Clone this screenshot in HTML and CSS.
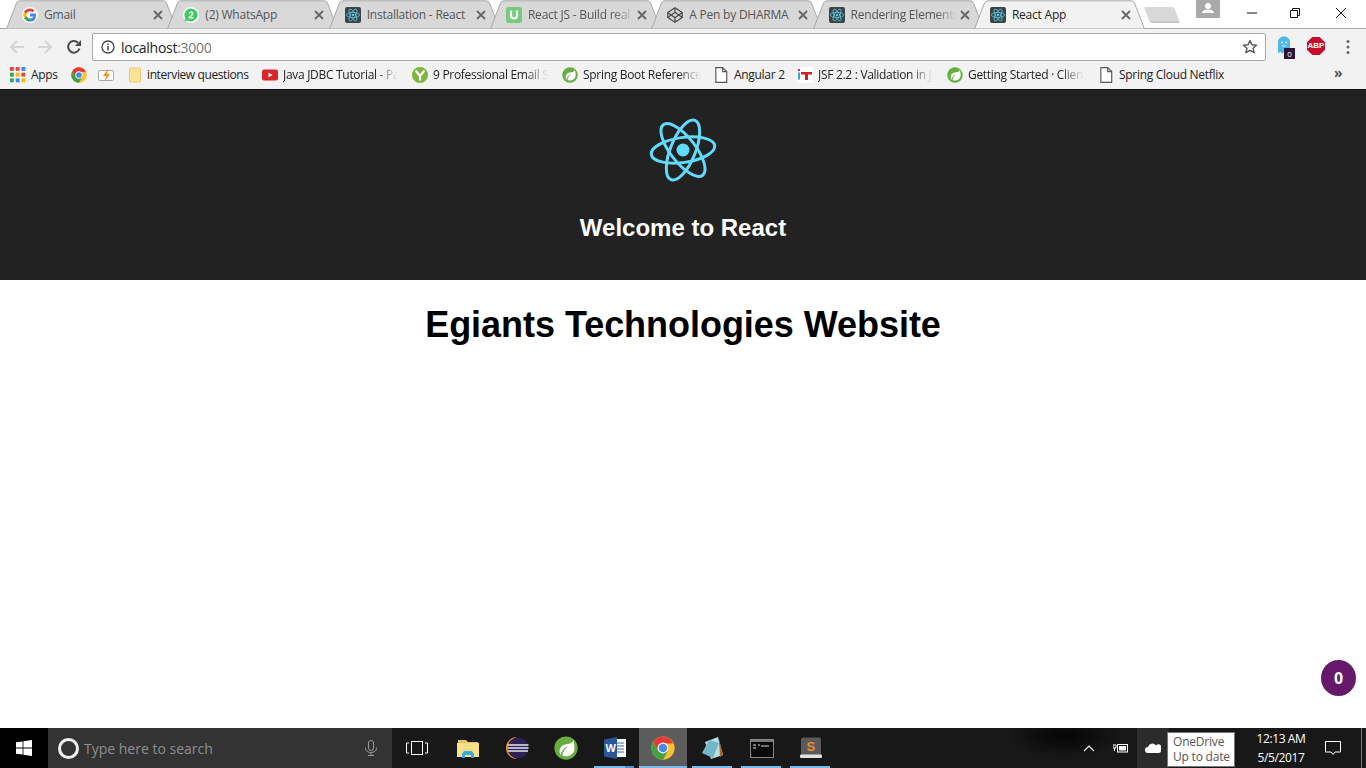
FILE: index.html
```html
<!DOCTYPE html>
<html lang="en">
<head>
<meta charset="utf-8">
<title>React App</title>
<link rel="stylesheet" href="styles.css">
</head>
<body>
<svg class="defs" aria-hidden="true">
  <symbol id="tabshape" viewBox="0 0 171 29"><path d="M0.5 29 L10.5 3 Q11.5 0.8 14 0.8 L157 0.8 Q159.5 0.8 160.5 3 L170.5 29 Z"/></symbol>
  <symbol id="x" viewBox="0 0 10 10"><path d="M1 1 L9 9 M9 1 L1 9" stroke="#666" stroke-width="1.8" fill="none"/></symbol>
  <symbol id="react" viewBox="0 0 16 16"><rect width="16" height="16" rx="2" fill="#3c4449"/><g fill="none" stroke="#5cc3dc" stroke-width=".8"><ellipse cx="8" cy="8" rx="6.6" ry="2.6"/><ellipse cx="8" cy="8" rx="6.6" ry="2.6" transform="rotate(60 8 8)"/><ellipse cx="8" cy="8" rx="6.6" ry="2.6" transform="rotate(120 8 8)"/></g><circle cx="8" cy="8" r="1.3" fill="#5cc3dc"/></symbol>
  <symbol id="google" viewBox="0 0 16 16"><circle cx="8" cy="8" r="8" fill="#fff"/><path d="M14 6.6H8v2.9h3.4c-.4 1.3-1.7 2.1-3.4 2.1V14.6c2 0 3.4-.6 4.5-1.7 1.2-1.2 1.7-3.2 1.5-6.3z" fill="#4285f4"/><path d="M8 11.6c-1.6 0-2.9-1-3.4-2.5L2 11c1.1 2.2 3.3 3.6 6 3.6z" fill="#34a853"/><path d="M4.6 9.1a3.7 3.7 0 0 1 0-2.3L2 4.8a6.6 6.6 0 0 0 0 6.2z" fill="#fbbc05"/><path d="M8 4.3c1 0 1.8.3 2.5 1l2-2C11.400 2.100 9.800 1.400 8 1.400 5.400 1.400 3.100 2.800 2 4.800l2.600 2C5.100 5.300 6.400 4.300 8 4.300z" fill="#ea4335"/></symbol>
  <symbol id="whatsapp" viewBox="0 0 16 16"><circle cx="8" cy="8" r="8" fill="#fff"/><path d="M8 1.500a6.500 6.500 0 0 0-5.500 10L1.500 14.500l3.100-1A6.500 6.500 0 1 0 8 1.500z" fill="#3ecb5d"/><path d="M5.500 6.300c.2-1.300 1.300-1.900 2.500-1.900 1.400 0 2.500.8 2.500 2.100 0 1.100-.7 1.800-1.600 2.500L7.600 10h3v1.500H5.400v-1.200l2.200-2c.9-.8 1.200-1.200 1.200-1.700 0-.5-.4-.8-.9-.8-.6 0-.9.400-1 1z" fill="#fff"/></symbol>
  <symbol id="udemy" viewBox="0 0 16 16"><rect width="16" height="16" rx="3" fill="#74cb7b"/><path d="M5 3.500v5a3 3 0 0 0 6 0v-5" fill="none" stroke="#fff" stroke-width="2.200"/></symbol>
  <symbol id="codepen" viewBox="0 0 16 16"><g fill="none" stroke="#444" stroke-width="1.200" stroke-linejoin="round"><path d="M8 .8 15.200 5.500v5L8 15.200.8 10.500v-5z"/><path d="M8 .8v4.400M8 10.800v4.400M.8 5.500 8 10.800l7.200-5.300M.8 10.500 8 5.200l7.200 5.300"/></g></symbol>
  <symbol id="apps" viewBox="0 0 14 14"><g><rect x="0" y="0" width="3.400" height="3.400" fill="#e8453c"/><rect x="5" y="0" width="3.400" height="3.400" fill="#e8453c"/><rect x="10" y="0" width="3.400" height="3.400" fill="#4285f4"/><rect x="0" y="5" width="3.400" height="3.400" fill="#34a853"/><rect x="5" y="5" width="3.400" height="3.400" fill="#fbbc05"/><rect x="10" y="5" width="3.400" height="3.400" fill="#e8453c"/><rect x="0" y="10" width="3.400" height="3.400" fill="#34a853"/><rect x="5" y="10" width="3.400" height="3.400" fill="#4285f4"/><rect x="10" y="10" width="3.400" height="3.400" fill="#fbbc05"/></g></symbol>
  <symbol id="chrome" viewBox="0 0 32 32"><circle cx="16" cy="16" r="15.500" fill="#fbc02d"/><path d="M16 .5A15.500 15.500 0 0 0 2.600 8.200L9.500 20 16 10h13.400A15.500 15.500 0 0 0 16 .5z" fill="#e53935"/><path d="M2.600 8.200A15.500 15.500 0 0 0 16 31.500L22.500 20H9.500z" fill="#43a047"/><circle cx="16" cy="16" r="7.300" fill="#fff"/><circle cx="16" cy="16" r="5.700" fill="#4a89e8"/></symbol>
  <symbol id="flash" viewBox="0 0 16 14"><rect x=".5" y="2.500" width="15" height="10" rx="1.500" fill="#fff" stroke="#aaa"/><path d="M10 .5 5 8h3l-1.500 5.500L12 6H9z" fill="#f29423"/></symbol>
  <symbol id="folder" viewBox="0 0 12 16"><rect x=".5" y="1" width="11" height="14" rx="1" fill="#fde293" stroke="#e9c874"/></symbol>
  <symbol id="yt" viewBox="0 0 16 12"><rect width="16" height="11" rx="2" y=".5" fill="#d9252a"/><path d="M6.500 3.500v5l4-2.500z" fill="#fff"/></symbol>
  <symbol id="ybm" viewBox="0 0 16 16"><circle cx="8" cy="8" r="8" fill="#7db53e"/><path d="M3.500 3.500 8 9v4.500M12.500 3.500 8 9" fill="none" stroke="#fff" stroke-width="2.200"/></symbol>
  <symbol id="spring" viewBox="0 0 32 32"><circle cx="16" cy="16" r="15.500" fill="#67ad3f"/><path d="M26 5.500c-1 3-3 4.500-8 5C11 11.200 6.500 15.500 7.500 22c.3 1.500 1 2.700 1.500 3.300C10 20 13 16 20 13c-5 3.500-8 7.500-9 13 6 2.500 14 .5 16-7 .8-3.500 0-9.500-1-13.500z" fill="#fff"/></symbol>
  <symbol id="doc" viewBox="0 0 12 14"><path d="M1.500.5h6l3.500 3.500v9.500H1.500zM7.500.5V4H11" fill="#fff" stroke="#555"/></symbol>
  <symbol id="it" viewBox="0 0 16 16"><rect width="16" height="16" fill="#fff"/><rect x="1" y="2" width="2" height="2" fill="#e22"/><rect x="1" y="5.500" width="2" height="7" fill="#3aa0e0"/><path d="M4 5h11v2.500h-4V13H8V7.500H4z" fill="#d21f1f"/></symbol>
  <symbol id="ghost" viewBox="0 0 14 18"><path d="M7 .5C3.200.5 1 3 1 6.500v11l2.400-1.800L5 17.500l2-1.800 2 1.800 1.600-1.800 2.400 1.800v-11C13 3 10.800.500 7 .5z" fill="#4db8ec"/><circle cx="5" cy="6.500" r="1" fill="#fff"/><circle cx="9.200" cy="6.500" r="1" fill="#fff"/><path d="M5 9.500q2 1.500 4.200 0" fill="none" stroke="#fff" stroke-width=".8"/></symbol>
  <symbol id="abp" viewBox="0 0 18 18"><path d="M5.300 0h7.400L18 5.300v7.400L12.700 18H5.300L0 12.700V5.300z" fill="#c70d2c"/></symbol>
</svg>

<header class="browser">
  <div class="tabstrip">
    <div class="tabs">
      <div class="tab"><svg class="tab-bg"><use href="#tabshape"/></svg><svg class="fav"><use href="#google"/></svg><span class="tab-title">Gmail</span><svg class="close"><use href="#x"/></svg></div>
      <div class="tab"><svg class="tab-bg"><use href="#tabshape"/></svg><svg class="fav"><use href="#whatsapp"/></svg><span class="tab-title">(2) WhatsApp</span><svg class="close"><use href="#x"/></svg></div>
      <div class="tab"><svg class="tab-bg"><use href="#tabshape"/></svg><svg class="fav"><use href="#react"/></svg><span class="tab-title">Installation - React</span><svg class="close"><use href="#x"/></svg></div>
      <div class="tab"><svg class="tab-bg"><use href="#tabshape"/></svg><svg class="fav"><use href="#udemy"/></svg><span class="tab-title fade">React JS - Build real</span><svg class="close"><use href="#x"/></svg></div>
      <div class="tab"><svg class="tab-bg"><use href="#tabshape"/></svg><svg class="fav"><use href="#codepen"/></svg><span class="tab-title">A Pen by DHARMA</span><svg class="close"><use href="#x"/></svg></div>
      <div class="tab"><svg class="tab-bg"><use href="#tabshape"/></svg><svg class="fav"><use href="#react"/></svg><span class="tab-title fade">Rendering Elements</span><svg class="close"><use href="#x"/></svg></div>
      <div class="tab active"><svg class="tab-bg"><use href="#tabshape"/></svg><svg class="fav"><use href="#react"/></svg><span class="tab-title">React App</span><svg class="close"><use href="#x"/></svg></div>
    </div>
    <div class="newtab"></div>
    <div class="profile"><svg viewBox="0 0 24 18" class="profile-icon"><circle cx="12" cy="6" r="3" fill="#fff"/><path d="M6 13c0-2.500 3-3.500 6-3.500s6 1 6 3.500z" fill="#fff"/></svg></div>
    <div class="winctl">
      <svg class="wc wc-min" viewBox="0 0 12 12"><path d="M1 6h10" stroke="#111" stroke-width="1" fill="none"/></svg>
      <svg class="wc wc-max" viewBox="0 0 12 12"><path d="M1.500 3.500h7v7h-7zM3.500 3.500v-2h7v7h-2" stroke="#111" stroke-width="1" fill="none"/></svg>
      <svg class="wc wc-close" viewBox="0 0 12 12"><path d="M1 1l10 10M11 1L1 11" stroke="#111" stroke-width="1" fill="none"/></svg>
    </div>
  </div>

  <div class="toolbar">
    <svg class="tool back" viewBox="0 0 16 16"><path d="M15 8H2M8 2 2 8l6 6" fill="none" stroke="#d4d4d4" stroke-width="2"/></svg>
    <svg class="tool forward" viewBox="0 0 16 16"><path d="M1 8h13M8 2l6 6-6 6" fill="none" stroke="#d4d4d4" stroke-width="2"/></svg>
    <svg class="tool reload" viewBox="0 0 16 16"><path d="M13.500 9.500A5.800 5.800 0 1 1 12 3.700" fill="none" stroke="#4a4a4a" stroke-width="2"/><path d="M15 1v6H9z" fill="#4a4a4a"/></svg>
    <div class="omnibox">
      <svg class="info" viewBox="0 0 14 14"><circle cx="7" cy="7" r="6" fill="none" stroke="#444" stroke-width="1.300"/><path d="M7 6v4.500M7 3.500v1.500" stroke="#444" stroke-width="1.500"/></svg>
      <span class="url">localhost<span class="port">:3000</span></span>
      <svg class="star" viewBox="0 0 16 16"><path d="M8 1.500l1.900 4.300 4.600.4-3.500 3 1.100 4.500L8 11.300l-4.100 2.400L5 9.200l-3.500-3 4.600-.4z" fill="none" stroke="#555" stroke-width="1.400" stroke-linejoin="round"/></svg>
    </div>
    <div class="ext ghost-wrap"><svg class="ghost" viewBox="0 0 14 18"><use href="#ghost"/></svg><span class="ghost-badge">0</span></div>
    <div class="ext abp-wrap"><svg class="abp"><use href="#abp"/></svg><span class="abp-text">ABP</span></div>
    <svg class="menu" viewBox="0 0 4 16"><circle cx="2" cy="2.500" r="1.500" fill="#666"/><circle cx="2" cy="8" r="1.500" fill="#666"/><circle cx="2" cy="13.500" r="1.500" fill="#666"/></svg>
  </div>

  <nav class="bookmarks">
    <div class="bm w-apps"><svg class="bm-i"><use href="#apps"/></svg><span class="bm-t">Apps</span></div>
    <div class="bm w-chrome"><svg class="bm-i"><use href="#chrome"/></svg></div>
    <div class="bm w-flash"><svg class="bm-i"><use href="#flash"/></svg></div>
    <div class="bm w-iq"><svg class="bm-i folder-i"><use href="#folder"/></svg><span class="bm-t tight">interview questions</span></div>
    <div class="bm w-150"><svg class="bm-i"><use href="#yt"/></svg><span class="bm-t fade">Java JDBC Tutorial - Part</span></div>
    <div class="bm w-150"><svg class="bm-i"><use href="#ybm"/></svg><span class="bm-t fade">9 Professional Email Sign</span></div>
    <div class="bm w-spring"><svg class="bm-i"><use href="#spring"/></svg><span class="bm-t fade">Spring Boot Reference Guide</span></div>
    <div class="bm w-angular"><svg class="bm-i"><use href="#doc"/></svg><span class="bm-t">Angular 2</span></div>
    <div class="bm w-150"><svg class="bm-i"><use href="#it"/></svg><span class="bm-t fade">JSF 2.2 : Validation in JSF</span></div>
    <div class="bm w-gs"><svg class="bm-i"><use href="#spring"/></svg><span class="bm-t fade">Getting Started · Client Side</span></div>
    <div class="bm w-sc"><svg class="bm-i"><use href="#doc"/></svg><span class="bm-t">Spring Cloud Netflix</span></div>
    <span class="more">»</span>
  </nav>
</header>

<div class="page">
  <section class="app-header">
    <svg class="app-logo" viewBox="0 0 80 80">
      <g fill="none" stroke="#61dafb" stroke-width="3">
        <ellipse cx="40" cy="40" rx="32" ry="12.500" transform="rotate(-8 40 40)"/>
        <ellipse cx="40" cy="40" rx="32" ry="12.500" transform="rotate(52 40 40)"/>
        <ellipse cx="40" cy="40" rx="32" ry="12.500" transform="rotate(112 40 40)"/>
      </g>
      <circle cx="40" cy="40" r="6.500" fill="#61dafb"/>
    </svg>
    <h2 class="welcome">Welcome to React</h2>
  </section>
  <h1 class="site-title">Egiants Technologies Website</h1>
  <div class="bubble">0</div>
</div>

<footer class="taskbar">
  <div class="start"><svg class="win" viewBox="0 0 16 16"><path d="M0 2.300 6.600 1.400V7.600H0zM7.400 1.300 16 0V7.600H7.400zM0 8.400H6.600V14.600L0 13.700zM7.400 8.400H16V16L7.400 14.700z" fill="#fff"/></svg></div>
  <div class="search">
    <span class="cortana"></span>
    <span class="search-text">Type here to search</span>
    <svg class="mic" viewBox="0 0 12 16"><rect x="3.500" y=".5" width="5" height="10" rx="2.500" fill="none" stroke="#999"/><path d="M.5 7.500v1a5.500 4 0 0 0 11 0v-1M6 12.500v3M3 15.500h6" fill="none" stroke="#999"/></svg>
  </div>
  <div class="tasks">
    <div class="task"><svg class="taskview" viewBox="0 0 22 14"><rect x="5.500" y=".5" width="11" height="13" fill="none" stroke="#fff"/><path d="M3 2H.5v10H3M19 2h2.500v10H19" fill="none" stroke="#fff"/></svg></div>
    <div class="task"><svg class="ticon" viewBox="0 0 24 24"><path d="M2 4h8l2 2h10v3H2z" fill="#e9c15a"/><rect x="1" y="7" width="22" height="14" fill="#fbe08a"/><path d="M8 15h8l2 3v4h-3v-3H9v3H6v-4z" fill="#3aa9e0"/></svg></div>
    <div class="task"><svg class="ticon" viewBox="0 0 24 24"><path d="M12 1a11 11 0 0 0 0 22A11.500 11.500 0 0 1 12 1z" fill="#f7941e"/><circle cx="13" cy="12" r="10.500" fill="#2c2255"/><path d="M2.500 9h21M2.500 12h21M3 15h20" stroke="#e8e6f0" stroke-width="1.500"/></svg></div>
    <div class="task"><svg class="ticon" viewBox="0 0 32 32"><use href="#spring"/></svg></div>
    <div class="task on word"><svg class="ticon" viewBox="0 0 24 24"><rect x="10" y="3" width="13" height="18" fill="#fff"/><path d="M13 7h8M13 10h8M13 13h8M13 16h8" stroke="#3a66a9"/><path d="M1 3.500 14 1v22L1 20.500z" fill="#2b579a"/><text x="2.500" y="16" class="wordw">W</text></svg></div>
    <div class="task on current"><svg class="ticon" viewBox="0 0 32 32"><use href="#chrome"/></svg></div>
    <div class="task on"><svg class="ticon" viewBox="0 0 24 24"><path d="M4 6 17 1l5 18-12 4z" fill="#b6dfe6"/><path d="M1 17 8 4l10 3-6 15z" fill="#74b6c6"/><path d="M18 3l4 16-3 2z" fill="#a86a20"/></svg></div>
    <div class="task on"><svg class="ticon" viewBox="0 0 24 24"><rect x=".5" y="3.500" width="23" height="18" fill="#0a0a0a" stroke="#888"/><rect x="1" y="4" width="22" height="2" fill="#777"/><path d="M3 9h3M3 12h3M8 9h2M11 10h8" stroke="#ddd"/></svg></div>
    <div class="task on"><svg class="ticon" viewBox="0 0 24 24"><rect x="2" y="1.500" width="20" height="20" rx="2" fill="#5a5a5a"/><rect x="1" y="18.500" width="22" height="3.500" rx="1.200" fill="#e2e2e2"/><text x="7.500" y="15" class="sublime">S</text></svg></div>
  </div>
  <div class="tray">
    <svg class="chev" viewBox="0 0 12 7"><path d="M1 6l5-5 5 5" fill="none" stroke="#fff" stroke-width="1.200"/></svg>
    <svg class="batt" viewBox="0 0 16 10"><path d="M0 2h3v3H0zM1.500 5v3" stroke="#fff" fill="none"/><rect x="4.500" y="1.500" width="10" height="7.500" fill="none" stroke="#fff"/><rect x="6" y="3" width="7" height="4.500" fill="#fff"/></svg>
    <div class="onedrive"><svg class="cloud" viewBox="0 0 16 10"><path d="M3 10a3 3 0 0 1 0-6 4.500 4.500 0 0 1 8-1.500A3.500 3.500 0 0 1 16 7.500 2.500 2.500 0 0 1 13.500 10z" fill="#fff"/></svg></div>
    <div class="clock"><div>12:13 AM</div><div>5/5/2017</div></div>
    <svg class="action" viewBox="0 0 16 16"><path d="M.5 1.500h15v10.500h-5.500L8 14.500 6 12H.5z" fill="none" stroke="#fff"/></svg>
    <span class="showdesk"></span>
    <div class="tooltip">OneDrive<br>Up to date</div>
  </div>
</footer>
</body>
</html>
```
FILE: styles.css
```css
* { box-sizing: border-box; }
html, body { margin: 0; height: 100%; }
body {
  width: 1366px; height: 768px; overflow: hidden;
  display: flex; flex-direction: column;
  background: #fff;
  font-family: "Open Sans", "Liberation Sans", sans-serif;
}
.defs { position: absolute; width: 0; height: 0; }

/* browser chrome */
.browser { flex: none; height: 90px; display: flex; flex-direction: column; border-bottom: 1px solid #111; }
.tabstrip { height: 29px; flex: none; display: flex; position: relative; border-bottom: 1px solid #a8a8a8; background: #fff; }
.tabs { display: flex; padding-left: 6px; }
.tab {
  position: relative; flex: none; width: 171px; height: 29px; margin-right: -9.7px;
  display: flex; align-items: center; padding: 0 14px 0 16px;
  color: #555; fill: #d8d8d8; stroke: #a8a8a8;
}
.tab.active { fill: #f2f2f2; color: #222; z-index: 2; }
.tab-bg { position: absolute; left: 0; top: 0; width: 171px; height: 29px; }
.fav { position: relative; flex: none; width: 16px; height: 16px; fill: none; stroke: none; }
.tab-title {
  position: relative; flex: 1; margin-left: 6px; white-space: nowrap; overflow: hidden;
  font-size: 12px; letter-spacing: -.22px;
}
.fade {
  -webkit-mask-image: linear-gradient(to right, #000 80%, transparent);
  mask-image: linear-gradient(to right, #000 80%, transparent);
}
.close { position: relative; flex: none; width: 10px; height: 10px; stroke: none; margin-left: 3px; }
.newtab {
  flex: none; width: 30px; height: 16px; margin: 7px 0 0 12px;
  background: #d8d8d8; border-bottom: 2px solid #c4c4c4; border-radius: 2px;
  transform: skewX(22deg);
}
.profile { flex: none; width: 24px; height: 18px; background: #aaa; margin-left: 19px; }
.profile-icon { display: block; width: 24px; height: 18px; }
.winctl { flex: 1; display: flex; padding-left: 26px; }
.wc { flex: none; width: 12px; height: 12px; margin-top: 7px; }
.wc-max { margin-left: 31px; }
.wc-close { margin-left: 34px; }

.toolbar { height: 33px; flex: none; background: #f2f2f2; display: flex; align-items: center; padding: 3px 0 0 9px; }
.tool { width: 16px; height: 16px; flex: none; }
.forward { margin-left: 12px; }
.reload { margin-left: 13px; }
.omnibox {
  flex: none; margin-left: 10px; width: 1174px; height: 28px; background: #fff;
  border: 1px solid #a9a9a9; border-radius: 2px;
  display: flex; align-items: center; padding: 0 7px 0 8px;
}
.info { width: 14px; height: 14px; flex: none; }
.url { margin-left: 6px; font-size: 14px; color: #222; flex: 1; letter-spacing: -.28px; }
.port { color: #777; }
.star { width: 16px; height: 16px; flex: none; }
.ext { position: relative; flex: none; }
.ghost-wrap { margin-left: 11px; width: 22px; height: 24px; }
.ghost { position: absolute; left: 0; top: 1px; width: 14px; height: 18px; }
.ghost-badge {
  position: absolute; left: 7px; top: 13px; width: 11px; height: 11px;
  background: #2c1338; color: #fff; font-size: 8px; line-height: 11px; text-align: center;
}
.abp-wrap { margin-left: 8px; width: 18px; height: 18px; margin-top: -2px; }
.abp { position: absolute; left: 0; top: 0; width: 18px; height: 18px; }
.abp-text { position: absolute; left: 0; top: 0; width: 18px; line-height: 18px; font-size: 8px; font-weight: 800; color: #fff; text-align: center; font-family: "Liberation Sans", sans-serif; }
.menu { width: 4px; height: 16px; margin-left: 21px; flex: none; }

.bookmarks { height: 27px; flex: none; background: #f2f2f2; display: flex; align-items: center; padding: 0 0 2px 10px; position: relative; }
.bm { display: flex; align-items: center; flex: none; overflow: hidden; }
.bm-i { width: 16px; height: 16px; flex: none; }
.folder-i { width: 14px; }
.bm-t { margin-left: 5px; font-size: 12px; letter-spacing: -.3px; color: #222; white-space: nowrap; overflow: hidden; flex: 1; }
.tight { letter-spacing: -.4px; }
.w-apps { width: 61px; }
.w-chrome { width: 27px; }
.w-flash { width: 30px; }
.w-iq { width: 134px; }
.w-150 { width: 150px; padding-right: 14px; }
.w-spring { width: 151px; padding-right: 12px; }
.w-angular { width: 84px; }
.w-gs { width: 151px; padding-right: 14px; }
.w-sc { width: 140px; }
.more { position: absolute; left: 1334px; top: 1px; font-size: 14px; color: #555; font-weight: 700; }

/* page */
.page { flex: 1; position: relative; text-align: center; }
.app-header { height: 190px; background: #222; padding-top: 20px; color: #fff; }
.app-logo { display: block; width: 80px; height: 80px; margin: 0 auto; }
.welcome { margin: 24px 0 0; font: 700 24px/28px "Liberation Sans", Arial, sans-serif; }
.site-title { margin: 23px 0 0; font: 700 36px/43px "Liberation Sans", Arial, sans-serif; letter-spacing: -.04px; color: #000; }
.bubble {
  position: absolute; left: 1321px; top: 570px; width: 35px; height: 36px; border-radius: 50%;
  background: #66186b; color: #fff; font-size: 16px; font-weight: 700; line-height: 36px; text-align: center;
}

/* taskbar */
.taskbar {
  height: 40px; flex: none; display: flex; position: relative;
  background:
    radial-gradient(ellipse 60px 22px at 1065px 8px, #050505, transparent),
    #181818;
}
.start { flex: none; width: 48px; background: #000; display: flex; align-items: center; justify-content: center; }
.win { width: 16px; height: 16px; }
.search { flex: none; width: 344px; background: #333; display: flex; align-items: center; padding-left: 10px; }
.cortana { width: 21px; height: 21px; border-radius: 50%; border: 3px solid #f0f0f0; flex: none; }
.search-text { margin-left: 5px; flex: 1; font-size: 14px; color: #8f8f8f; }
.mic { width: 12px; height: 16px; margin-right: 15px; flex: none; }
.tasks { flex: none; display: flex; padding-left: 2px; width: 440px; }
.task { flex: none; width: 49px; display: flex; align-items: center; justify-content: center; position: relative; }
.task.on::after {
  content: ""; position: absolute; left: 4px; right: 5px; bottom: 0; height: 2px; background: #76b9ed;
}
.task.word::before {
  content: ""; position: absolute; left: 35px; right: 5px; bottom: 0; height: 2px; background: #4f8fc4; z-index: 1;
}
.task.current { width: 48px; margin-right: 1px; background: #5c5c5c; }
.task.current::after { left: 0; right: 0; }
.taskview { width: 22px; height: 14px; margin-left: -4px; }
.ticon { width: 24px; height: 24px; }
.wordw { font: 700 11px "Liberation Sans", sans-serif; fill: #fff; }
.sublime { font: 700 13px "Liberation Sans", sans-serif; fill: #f08a2e; }
.tray { flex: 1; display: flex; align-items: center; position: relative; padding-left: 251px; }
.chev { width: 12px; height: 7px; flex: none; }
.batt { width: 16px; height: 10px; flex: none; margin-left: 18px; }
.onedrive { width: 32px; height: 40px; flex: none; margin-left: 8px; background: #2b2b2b; display: flex; align-items: center; justify-content: center; }
.cloud { width: 16px; height: 10px; }
.clock {
  margin-left: 82px; width: 60px; flex: none; text-align: center; color: #fff;
  font-size: 12px; line-height: 19px; letter-spacing: -.4px;
}
.action { width: 16px; height: 16px; flex: none; margin-left: 14px; }
.showdesk { width: 1px; height: 40px; background: #777; margin-left: 20px; flex: none; }
.tooltip {
  position: absolute; left: 335px; top: 4px; width: 68px; height: 35px; padding: 1px 0 0 5px;
  background: #fff; border: 1px solid #777; color: #555; font-size: 12px; line-height: 15px; letter-spacing: -.2px;
}
```
